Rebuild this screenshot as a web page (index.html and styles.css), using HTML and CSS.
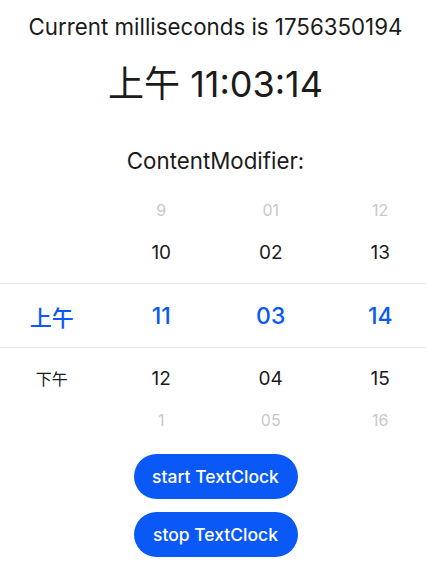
FILE: index.html
```html
<!DOCTYPE html>
<html lang="zh">
<head>
<meta charset="utf-8">
<link rel="stylesheet" href="styles.css">
</head>
<body>
<main class="page">
  <p class="millis">Current milliseconds is 1756350194</p>
  <p class="clock">上午 11:03:14</p>
  <p class="label">ContentModifier:</p>
  <div class="picker-wrap">
    <div class="picker">
      <div class="row edge"><span></span><span>9</span><span>01</span><span>12</span></div>
      <div class="row near"><span></span><span>10</span><span>02</span><span>13</span></div>
      <div class="row selected"><span class="cjk">上午</span><span>11</span><span>03</span><span>14</span></div>
      <div class="row near"><span class="cjk">下午</span><span>12</span><span>04</span><span>15</span></div>
      <div class="row edge"><span></span><span>1</span><span>05</span><span>16</span></div>
    </div>
  </div>
  <div class="actions">
    <button class="btn">start TextClock</button>
    <button class="btn">stop TextClock</button>
  </div>
</main>
</body>
</html>
```

FILE: styles.css
```css
* { box-sizing: border-box; }
html, body { margin: 0; padding: 0; background: #ffffff; }
body {
  font-family: Inter, "Noto Sans CJK SC", sans-serif;
  color: #1b1b1b;
  width: 426px;
  height: 588px;
  overflow: hidden;
}
.page {
  display: flex;
  flex-direction: column;
  align-items: center;
}
.millis {
  margin: 13px 0 0 5px;
  font-size: 22.3px;
  line-height: 28px;
  text-align: center;
}
.clock {
  margin: 21px 0 0 5px;
  font-size: 36px;
  line-height: 44px;
  text-align: center;
}
.label {
  margin: 41px 0 0 5px;
  font-size: 22.3px;
  line-height: 28px;
  text-align: center;
}
.picker-wrap {
  width: 100%;
  overflow: hidden;
  margin-top: 14px;
}
.picker {
  margin: 0 -9px 0 -3px;
  display: flex;
  flex-direction: column;
}
.row {
  display: grid;
  grid-template-columns: repeat(4, 1fr);
  justify-items: center;
  align-items: center;
}
.row span { display: block; }
.edge {
  height: 42px;
  font-size: 16px;
  color: #c8c8c8;
}
.near {
  height: 42px;
  font-size: 19px;
  color: #1b1b1b;
}
.near .cjk { font-size: 16px; }
.selected {
  height: 65px;
  margin: 10px 0 9px;
  border-top: 1px solid #e6e6e6;
  border-bottom: 1px solid #e6e6e6;
  font-size: 23px;
  font-weight: 500;
  color: #0a59f7;
}
.selected .cjk { font-size: 22px; font-weight: 500; }
.actions {
  margin: 13px 0 0 5px;
  display: flex;
  flex-direction: column;
  align-items: center;
  gap: 13px;
}
.btn {
  width: 164px;
  height: 45px;
  border: none;
  border-radius: 23px;
  background: #0a59f7;
  color: #ffffff;
  font-family: Inter, sans-serif;
  font-size: 17.5px;
  font-weight: 500;
  padding: 0;
}
```
